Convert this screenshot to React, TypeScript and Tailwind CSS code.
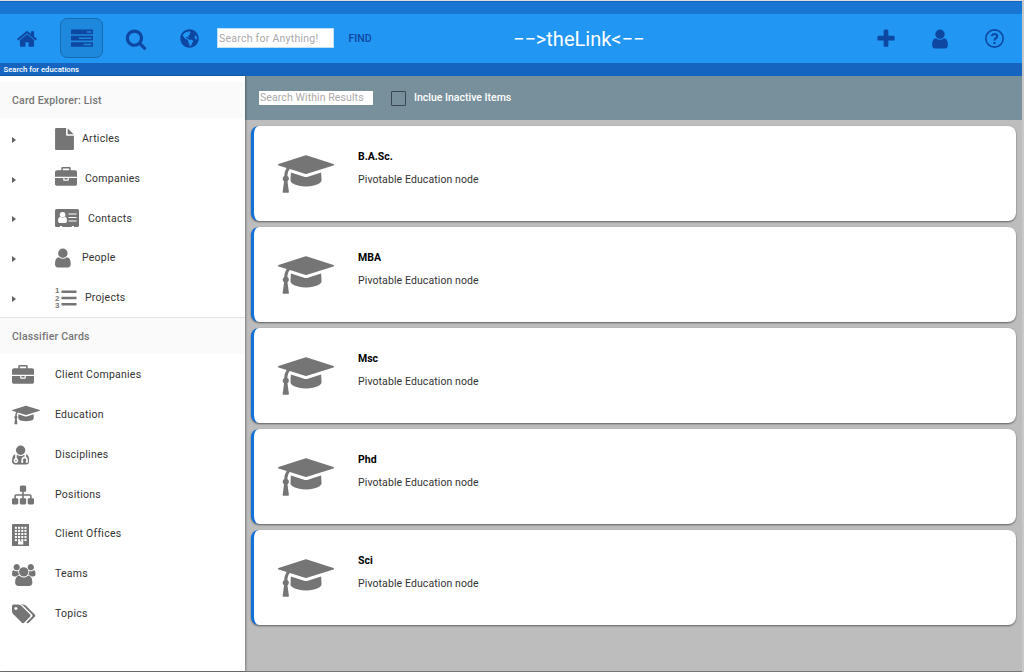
import React from 'react';
import { FaGlobeAmericas } from 'react-icons/fa';

const HOME = 'M1472 992v480q0 26-19 45t-45 19h-384v-384h-256v384h-384q-26 0-45-19t-19-45v-480q0-1 .5-3t.5-3l575-474 575 474q1 2 1 6zm223-69l-62 74q-8 9-21 11h-3q-13 0-21-7l-692-577-692 577q-12 8-24 7-13-2-21-11l-62-74q-8-10-7-23.5t11-21.5l719-599q32-26 76-26t76 26l244 204v-195q0-14 9-23t23-9h192q14 0 23 9t9 23v408l219 182q10 8 11 21.5t-7 23.5z';
const TASKS = 'M1024 1408h640v-128h-640v128zm-384-512h1024v-128h-1024v128zm640-512h384v-128h-384v128zm512 832v256q0 26-19 45t-45 19h-1664q-26 0-45-19t-19-45v-256q0-26 19-45t45-19h1664q26 0 45 19t19 45zm0-512v256q0 26-19 45t-45 19h-1664q-26 0-45-19t-19-45v-256q0-26 19-45t45-19h1664q26 0 45 19t19 45zm0-512v256q0 26-19 45t-45 19h-1664q-26 0-45-19t-19-45v-256q0-26 19-45t45-19h1664q26 0 45 19t19 45z';
const SEARCH = 'M1216 832q0-185-131.5-316.5t-316.5-131.5-316.5 131.5-131.5 316.5 131.5 316.5 316.5 131.5 316.5-131.5 131.5-316.5zm512 832q0 52-38 90t-90 38q-54 0-90-38l-343-342q-179 124-399 124-143 0-273.5-55.5t-225-150-150-225-55.5-273.5 55.5-273.5 150-225 225-150 273.5-55.5 273.5 55.5 225 150 150 225 55.5 273.5q0 220-124 399l343 343q37 37 37 90z';
const PLUS = 'M1600 736v192q0 40-28 68t-68 28h-416v416q0 40-28 68t-68 28h-192q-40 0-68-28t-28-68v-416h-416q-40 0-68-28t-28-68v-192q0-40 28-68t68-28h416v-416q0-40 28-68t68-28h192q40 0 68 28t28 68v416h416q40 0 68 28t28 68z';
const USER = 'M1536 1399q0 109-62.5 187t-150.5 78h-854q-88 0-150.5-78t-62.5-187q0-85 8.5-160.5t31.5-152 58.5-131 94-89 134.5-34.5q131 128 313 128t313-128q76 0 134.5 34.5t94 89 58.5 131 31.5 152 8.5 160.5zm-256-887q0 159-112.5 271.5t-271.5 112.5-271.5-112.5-112.5-271.5 112.5-271.5 271.5-112.5 271.5 112.5 112.5 271.5z';
const FILE = 'M1152 512v-472q22 14 36 28l408 408q14 14 28 36h-472zm-128 32q0 40 28 68t68 28h544v1056q0 40-28 68t-68 28h-1344q-40 0-68-28t-28-68v-1600q0-40 28-68t68-28h800v544z';
const BRIEFCASE = 'M640 256h512v-128h-512v128zm1152 640v480q0 66-47 113t-113 47h-1472q-66 0-113-47t-47-113v-480h672v160q0 26 19 45t45 19h320q26 0 45-19t19-45v-160h672zm-768 0v128h-256v-128h256zm768-480v384h-1792v-384q0-66 47-113t113-47h352v-160q0-40 28-68t68-28h576q40 0 68 28t28 68v160h352q66 0 113 47t47 113z';
const CAP = 'M1774 836l18 316q4 69-82 128t-235 93.5-323 34.5-323-34.5-235-93.5-82-128l18-316 574 181q22 7 48 7t48-7zm530-324q0 23-22 31l-1120 352q-4 1-10 1t-10-1l-652-206q-43 34-71 111.5t-34 178.5q63 36 63 109 0 69-58 107l58 433q2 14-8 25-9 11-24 11h-192q-15 0-24-11-10-11-8-25l58-433q-58-38-58-107 0-73 65-111 11-207 98-330l-333-104q-22-8-22-31t22-31l1120-352q4-1 10-1t10 1l1120 352q22 8 22 31z';
const DOCTOR = 'M576 1344q0 26-19 45t-45 19-45-19-19-45 19-45 45-19 45 19 19 45zm1024 64q0 120-73 189.5t-194 69.5h-874q-121 0-194-69.5t-73-189.5q0-68 5.5-131t24-138 47.5-132.5 81-103 120-60.5q-22 52-22 120v203q-58 20-93 70t-35 111q0 80 56 136t136 56 136-56 56-136q0-61-35.5-111t-92.5-70v-203q0-62 25-93 132 104 295 104t295-104q25 31 25 93v64q-106 0-181 75t-75 181v89q-32 29-32 71 0 40 28 68t68 28 68-28 28-68q0-42-32-71v-89q0-52 38-90t90-38 90 38 38 90v89q-32 29-32 71 0 40 28 68t68 28 68-28 28-68q0-42-32-71v-89q0-68-34.5-127.5t-93.5-93.5q0-10 .5-42.5t0-48-2.5-41.5-7-47-13-40q68 15 120 60.5t81 103 47.5 132.5 24 138 5.5 131zm-320-896q0 159-112.5 271.5t-271.5 112.5-271.5-112.5-112.5-271.5 112.5-271.5 271.5-112.5 271.5 112.5 112.5 271.5z';
const SITEMAP = 'M1792 1248v320q0 40-28 68t-68 28h-320q-40 0-68-28t-28-68v-320q0-40 28-68t68-28h96v-192h-512v192h96q40 0 68 28t28 68v320q0 40-28 68t-68 28h-320q-40 0-68-28t-28-68v-320q0-40 28-68t68-28h96v-192h-512v192h96q40 0 68 28t28 68v320q0 40-28 68t-68 28h-320q-40 0-68-28t-28-68v-320q0-40 28-68t68-28h96v-192q0-52 38-90t90-38h512v-192h-96q-40 0-68-28t-28-68v-320q0-40 28-68t68-28h320q40 0 68 28t28 68v320q0 40-28 68t-68 28h-96v192h512q52 0 90 38t38 90v192h96q40 0 68 28t28 68z';
const USERS = 'M593 896q-162 5-265 128h-134q-82 0-138-40.5t-56-118.5q0-353 124-353 6 0 43.5 21t97.5 42.5 119 21.5q67 0 133-23-5 37-5 66 0 139 81 256zm1071 637q0 120-73 189.5t-194 69.5h-874q-121 0-194-69.5t-73-189.5q0-53 3.5-103.5t14-109 26.5-108.5 43-97.5 62-81 85.5-53.5 111.5-20q10 0 43 21.5t73 48 107 48 135 21.5 135-21.5 107-48 73-48 43-21.5q61 0 111.5 20t85.5 53.5 62 81 43 97.5 26.5 108.5 14 109 3.5 103.5zm-1024-1277q0 106-75 181t-181 75-181-75-75-181 75-181 181-75 181 75 75 181zm704 384q0 159-112.5 271.5t-271.5 112.5-271.5-112.5-112.5-271.5 112.5-271.5 271.5-112.5 271.5 112.5 112.5 271.5zm576 225q0 78-56 118.5t-138 40.5h-134q-103-123-265-128 81-117 81-256 0-29-5-66 66 23 133 23 59 0 119-21.5t97.5-42.5 43.5-21q124 0 124 353zm-128-609q0 106-75 181t-181 75-181-75-75-181 75-181 181-75 181 75 75 181z';
const TAGS = 'M448 448q0-53-37.5-90.5t-90.5-37.5-90.5 37.5-37.5 90.5 37.5 90.5 90.5 37.5 90.5-37.5 37.5-90.5zm1067 576q0 53-37 90l-491 492q-39 37-91 37-53 0-90-37l-715-716q-38-37-64.5-101t-26.5-117v-416q0-52 38-90t90-38h416q53 0 117 26.5t102 64.5l715 714q37 39 37 91zm384 0q0 53-37 90l-491 492q-39 37-91 37-36 0-59-14t-53-45l470-470q37-37 37-90 0-52-37-91l-715-714q-38-38-102-64.5t-117-26.5h224q53 0 117 26.5t102 64.5l715 714q37 39 37 91z';

function Icon({ d, box = '0 0 1792 1792', className }: { d: string; box?: string; className: string }) {
  return (
    <svg viewBox={box} fill="currentColor" className={`block shrink-0 ${className}`}>
      <path d={d} />
    </svg>
  );
}

function ContactCard() {
  return (
    <svg viewBox="0 0 24 18" className="block h-[18px] w-6 shrink-0">
      <rect width="24" height="18" rx="1.500" fill="currentColor" />
      <path fill="#fff" d="M5 17.100h2.200v.9h-2.200zM16.800 17.100h2.200v.9h-2.200z" />
      <circle cx="7.600" cy="5.800" r="2.800" fill="#fff" />
      <path fill="#fff" d="M5 7.800Q7.600 10 10.200 7.800Q12 8.500 12 11.500Q12 14 10.500 14H4.700Q3 14 3 11.500Q3 8.500 5 7.800z" />
      <path stroke="#fff" strokeWidth="1.200" d="M13.500 5H21.500M13.500 8.500H21.500M13.500 12H21.500" />
    </svg>
  );
}

function NumberedList() {
  return (
    <svg viewBox="0 0 22 22" fill="currentColor" className="block h-[22px] w-[22px] shrink-0 overflow-visible">
      <path d="M6.500 3.500h15v2.400h-15zM6.500 9.800h15v2.400h-15zM6.500 16h15v2.400h-15z" />
      <g className="font-['Liberation_Sans',sans-serif] text-[8px] font-bold">
        <text x="0" y="6">1</text>
        <text x="0" y="13.700">2</text>
        <text x="0" y="21.400">3</text>
      </g>
    </svg>
  );
}

function Building() {
  return (
    <svg viewBox="0 0 1408 1792" className="block h-[22px] w-[17.3px] shrink-0">
      <rect width="1408" height="1792" rx="50" fill="currentColor" />
      <g fill="#fff">
        {[230, 490, 750, 1010].map((x) =>
          [230, 480, 730, 980, 1230].map((y) => <rect key={`${x}-${y}`} x={x} y={y} width="170" height="160" />),
        )}
        <rect x="490" y="1400" width="430" height="270" />
      </g>
    </svg>
  );
}

const explorer = [
  { label: 'Articles', icon: <Icon d={FILE} box="128 0 1536 1792" className="h-[22px] w-[19px]" />, gap: 'gap-2' },
  { label: 'Companies', icon: <Icon d={BRIEFCASE} className="mb-[2px] size-[22px]" />, gap: 'gap-2' },
  { label: 'Contacts', icon: <ContactCard />, gap: 'gap-[9px]' },
  { label: 'People', icon: <Icon d={USER} box="256 0 1408 1792" className="h-[22px] w-[17.3px]" />, gap: 'gap-[9.700px]' },
  { label: 'Projects', icon: <NumberedList />, gap: 'gap-2' },
];

const classifiers = [
  { label: 'Client Companies', icon: <Icon d={BRIEFCASE} className="size-[22px]" /> },
  { label: 'Education', icon: <Icon d={CAP} box="0 0 2304 1792" className="h-[22px] w-7" /> },
  { label: 'Disciplines', icon: <Icon d={DOCTOR} box="192 0 1408 1792" className="h-[22px] w-[17.3px]" /> },
  { label: 'Positions', icon: <Icon d={SITEMAP} className="size-[22px]" /> },
  { label: 'Client Offices', icon: <Building /> },
  { label: 'Teams', icon: <Icon d={USERS} box="0 0 1920 1792" className="h-[22px] w-[23.500px]" /> },
  { label: 'Topics', icon: <Icon d={TAGS} box="0 0 1920 1792" className="h-[22px] w-[23.500px]" /> },
];

const results = ['B.A.Sc.', 'MBA', 'Msc', 'Phd', 'Sci'];

function Header() {
  return (
    <header className="shrink-0">
      <div className="h-0.5 border-b border-[#1565c0] bg-[#dedede]" />
      <div className="h-3 bg-[#1976d2]" />
      <div className="flex h-[49px] items-center bg-[#2196f3] pb-px text-[#0d47a1]">
        <Icon d={HOME} className="ml-4 mt-px size-[22px]" />
        <div className="ml-[22px] flex h-10 w-[43px] items-center justify-center rounded-[7px] border border-[#176cb0] bg-[#1e88dc]">
          <Icon d={TASKS} className="mt-px size-[22px]" />
        </div>
        <Icon d={SEARCH} className="ml-[22px] mt-px size-[22px]" />
        <FaGlobeAmericas className="ml-[33px] size-[19px]" />
        <input placeholder="Search for Anything!" className="ml-[18px] h-5 w-[117px] border border-[#bfdfff] bg-white px-px text-[10.500px] tracking-[0.25px] outline-none placeholder:text-[#a9a9a9]" />
        <button className="ml-[14px] mt-[2px] w-6 text-[10.500px] font-medium">FIND</button>
        <h1 className="ml-[141px] mt-px w-[132px] whitespace-nowrap text-[20px] leading-6 text-white">−−&gt;theLink&lt;−−</h1>
        <Icon d={PLUS} className="ml-[230px] mt-[2px] size-[22px]" />
        <Icon d={USER} className="ml-8 mt-[2px] size-[22px]" />
        <svg viewBox="0 0 18 18" className="ml-[34px] size-[19px]" fill="none" stroke="currentColor">
          <circle cx="9" cy="9" r="8.200" strokeWidth="1.500" />
          <path strokeWidth="2" d="M6.200 6.700Q7.200 4.500 9.300 4.700Q11.700 5 11.500 7Q11.400 8.200 10 9Q9 9.600 9 10.800M9 12.200V14.200" />
        </svg>
      </div>
      <div className="h-[13px] bg-[#1565c0] pl-[3.500px] text-[7.700px] font-medium leading-[13px] text-white">Search for educations</div>
    </header>
  );
}

function SectionTitle({ children }: { children: React.ReactNode }) {
  return <h2 className="flex h-9 shrink-0 items-center bg-[#fafafa] pl-3 pt-[2px] text-[10.500px] font-medium tracking-[0.2px] text-[#757575]">{children}</h2>;
}

function Sidebar() {
  return (
    <aside className="z-10 flex w-[245px] shrink-0 flex-col bg-white pt-[6px] text-[10.500px] tracking-[0.25px] text-[#333] shadow-[1px_0_2px_rgba(0,0,0,0.35)]">
      <SectionTitle>Card Explorer: List</SectionTitle>
      <ul>
        {explorer.map(({ label, icon, gap }) => (
          <li key={label} className="flex h-[39.800px] items-center pt-[2px]">
            <svg viewBox="0 0 4 6" className="ml-3 mr-[39px] mt-0.5 h-[6px] w-1 fill-[#616161]"><path d="M0 0L4 3L0 6z" /></svg>
            <div className={`flex items-center ${gap}`}>
              <span className="text-[#757575]">{icon}</span>
              <span>{label}</span>
            </div>
          </li>
        ))}
      </ul>
      <div className="h-px shrink-0 bg-[#e0e0e0]" />
      <SectionTitle>Classifier Cards</SectionTitle>
      <ul>
        {classifiers.map(({ label, icon }) => (
          <li key={label} className="flex h-[39.800px] items-center pl-3 pt-[2.500px]">
            <span className="w-[43px] pt-px text-[#757575]">{icon}</span>
            <span>{label}</span>
          </li>
        ))}
      </ul>
    </aside>
  );
}

export default function App() {
  return (
    <div className="flex h-[672px] w-[1024px] overflow-hidden bg-[#d0d0d0] font-['Roboto',sans-serif]">
      <div className="flex w-[1022px] shrink-0 flex-col border-b border-[#777]">
        <Header />
        <div className="flex min-h-0 flex-1">
          <Sidebar />
          <main className="flex-1 bg-[#bdbdbd]">
            <div className="flex h-11 items-center bg-[#78909c] pl-[14px]">
              <input placeholder="Search Within Results" className="h-[14px] w-[114px] bg-white px-px text-[10.500px] tracking-[0.1px] outline-none placeholder:text-[#a9a9a9]" />
              <span className="ml-[18px] size-[15px] rounded-[1px] border-[1.500px] border-[#37474f]" />
              <span className="ml-2 text-[10.500px] font-medium text-white">Inclue Inactive Items</span>
            </div>
            <div className="flex flex-col gap-[6px] pl-[6px] pr-[6px] pt-[6px]">
              {results.map((name) => (
                <article key={name} className="flex h-[95px] rounded-lg border-l-[3px] border-[#1070dc] bg-white pl-6 shadow-[0_1px_2px_rgba(0,0,0,0.5)]">
                  <Icon d={CAP} box="0 0 2304 1792" className="mt-[25.500px] h-[44px] w-14 text-[#757575]" />
                  <div className="ml-6 pt-6 text-[10.500px]">
                    <h3 className="h-[23px] font-bold leading-[14px] text-black">{name}</h3>
                    <p className="leading-[14px] tracking-[0.1px] text-[#333]">Pivotable Education node</p>
                  </div>
                </article>
              ))}
            </div>
          </main>
        </div>
      </div>
      <div className="w-0.5 shrink-0 bg-[#c8c8c8]" />
    </div>
  );
}
